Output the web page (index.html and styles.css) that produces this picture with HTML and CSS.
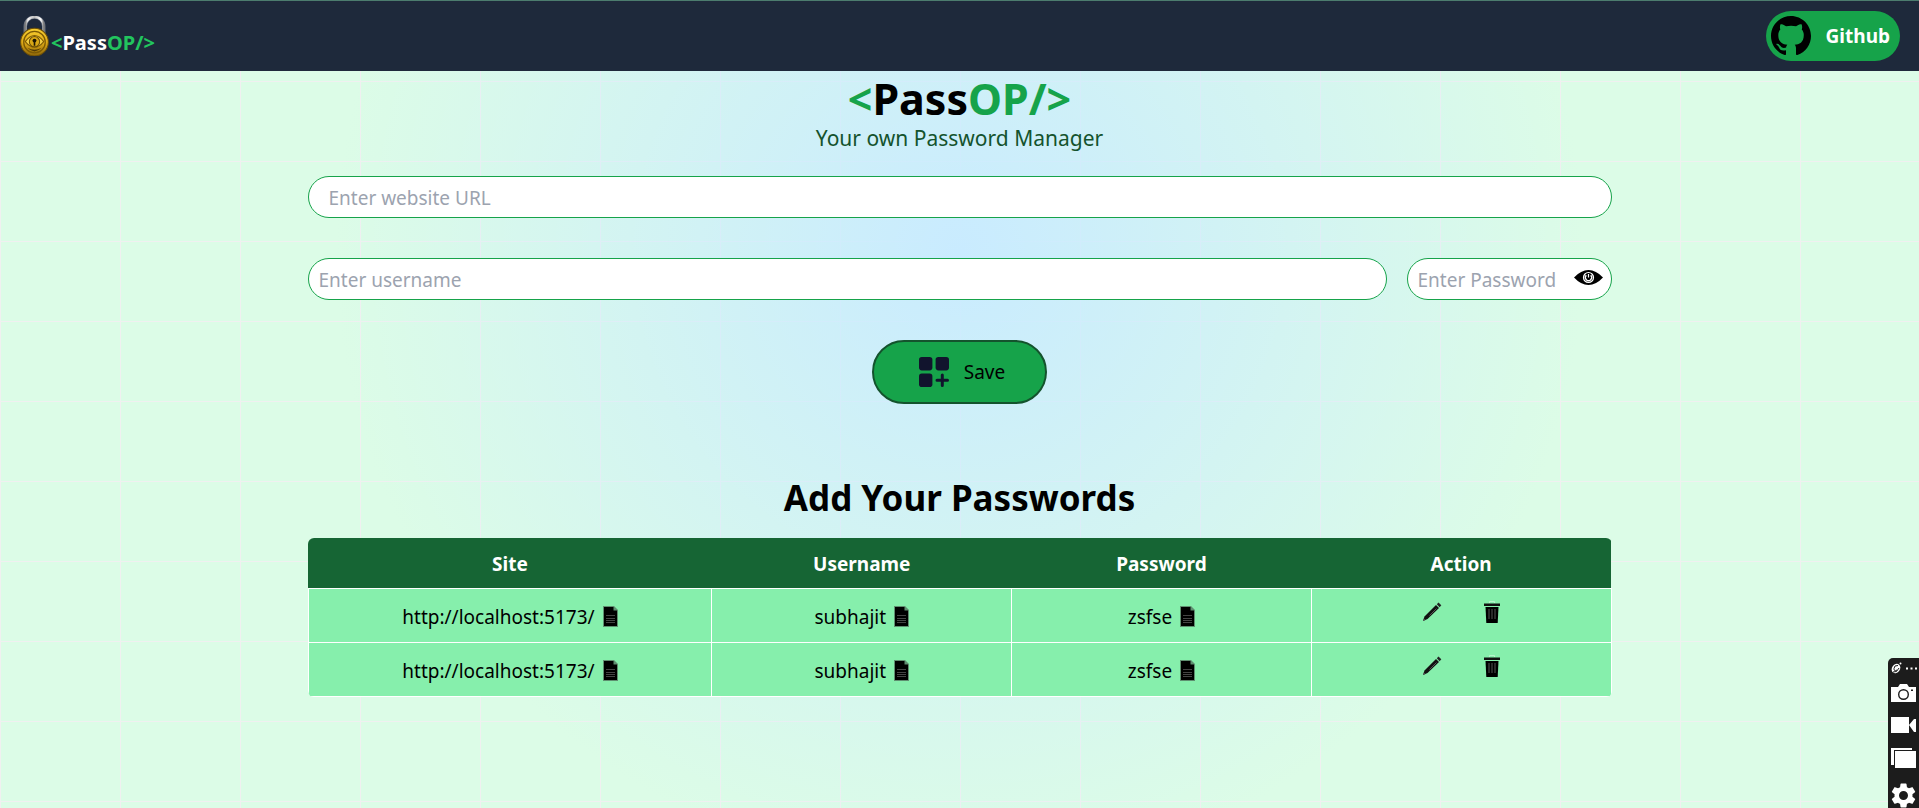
FILE: index.html
```html
<!DOCTYPE html>
<html lang="en">
<head>
<meta charset="utf-8">
<title>PassOP - Password Manager</title>
<link rel="stylesheet" href="styles.css">
</head>
<body>
<svg class="sprite" aria-hidden="true">
  <symbol id="doc" viewBox="0 0 15 21">
    <path d="M0 0h11l4 4v17H0z" fill="#5f8f70"/>
    <path d="M1 1h9.500v3.500H14V20H1z" fill="#000"/>
    <path d="M3 9.500h9M3 12.500h9M3 14.500h9M3 16.500h9" stroke="#444" stroke-width="1"/>
  </symbol>
  <symbol id="pencil" viewBox="0 0 20 20">
    <path d="M1 19l1.500-4.500L14 3l3 3L5.500 17z" fill="#111"/>
    <path d="M14.800 2.200L16.500.5l2.800 2.800-1.700 1.900z" fill="#222"/>
    <path d="M7.500 13.500L14.500 6.500" stroke="#555" stroke-width="1"/>
    <path d="M1 19l.8-2.500L3.500 18z" fill="#555"/>
  </symbol>
  <symbol id="trash" viewBox="0 0 16 22">
    <path d="M5.500 2V.5h5V2" fill="none" stroke="#b8f5cd" stroke-width="1"/>
    <path d="M0 2.500h16v2.500H0z" fill="#111"/>
    <path d="M1.500 6h13l-.8 16H2.300z" fill="#000"/>
    <path d="M5 8v10M8 8v10M11 8v10" stroke="#555" stroke-width="1"/>
  </symbol>
</svg>

<header class="navbar">
  <a class="brand" href="#">
    <svg class="lock" viewBox="0 0 28 39" aria-hidden="true">
      <defs>
        <linearGradient id="steel" x1="0" x2="1"><stop offset="0" stop-color="#777"/><stop offset=".15" stop-color="#f5f5f5"/><stop offset=".5" stop-color="#bbb"/><stop offset=".85" stop-color="#fff"/><stop offset="1" stop-color="#777"/></linearGradient>
        <linearGradient id="gold" x1="0" y1="0" x2="0" y2="1"><stop offset="0" stop-color="#f7cf32"/><stop offset=".5" stop-color="#e0ab17"/><stop offset="1" stop-color="#8d6508"/></linearGradient>
      </defs>
      <path d="M5 18V10a9 9 0 0 1 18 0v8" fill="none" stroke="#687080" stroke-width="3.400"/>
      <path d="M5 18V10a9 9 0 0 1 18 0v8" fill="none" stroke="url(#steel)" stroke-width="2.400"/>
      <circle cx="14" cy="25.500" r="13.500" fill="url(#gold)" stroke="#6b4e08"/>
      <circle cx="14" cy="25.500" r="10.500" fill="none" stroke="#7b5905" stroke-width="1.200"/>
      <path d="M5 25q9-12 18 0-9 11-18 0z" fill="#f3cf43" stroke="#7b5905"/>
      <path d="M7 31q7 4 14 0-7 7-14 0z" fill="#4f3905"/>
      <circle cx="14" cy="25" r="5" fill="#d9a716" stroke="#6b4e08"/>
      <circle cx="14" cy="24" r="1.900" fill="#1d1604"/>
      <path d="M13.200 24h1.600v5h-1.600z" fill="#1d1604"/>
    </svg>
    <span class="brand-name"><span class="lime">&lt;</span>Pass<span class="lime">OP/&gt;</span></span>
  </a>
  <button class="github" type="button">
    <svg class="octocat" viewBox="0 0 16 16" aria-hidden="true"><path d="M8 0C3.580 0 0 3.580 0 8c0 3.540 2.290 6.530 5.470 7.590.4.070.550-.17.550-.38 0-.19-.01-.82-.01-1.490-2.010.37-2.530-.49-2.690-.94-.09-.23-.48-.94-.82-1.130-.28-.15-.68-.52-.01-.53.630-.01 1.080.580 1.230.820.720 1.210 1.870.870 2.330.660.070-.52.280-.87.510-1.070-1.780-.2-3.640-.89-3.640-3.950 0-.87.310-1.590.820-2.150-.08-.2-.36-1.020.080-2.120 0 0 .67-.21 2.200.820.640-.18 1.320-.27 2-.27s1.360.09 2 .27c1.530-1.040 2.200-.82 2.200-.82.440 1.100.160 1.920.080 2.120.510.560.820 1.270.820 2.150 0 3.070-1.870 3.750-3.650 3.950.290.250.540.730.540 1.480 0 1.070-.01 1.930-.01 2.200 0 .21.150.460.550.380A8.010 8.010 0 0 0 16 8c0-4.420-3.580-8-8-8z"/></svg>
    <span>Github</span>
  </button>
</header>

<main class="container">
  <h1 class="title"><span class="green">&lt;</span>Pass<span class="green">OP/&gt;</span></h1>
  <p class="tagline">Your own Password Manager</p>

  <form class="form">
    <input class="field field-url" type="text" placeholder="Enter website URL" aria-label="Website URL">
    <div class="credentials">
      <input class="field" type="text" placeholder="Enter username" aria-label="Username">
      <div class="secret">
        <input class="field" type="password" placeholder="Enter Password" aria-label="Password">
        <button class="reveal" type="button" aria-label="Show password">
          <svg class="eye" viewBox="0 0 29 15" aria-hidden="true">
            <path d="M0 7.500Q7 0 14.500 0T29 7.500Q22 15 14.500 15T0 7.500z"/>
            <circle cx="14.500" cy="7.500" r="5" fill="none" stroke="#fff" stroke-width="1.200"/>
            <path d="M12.300 5.300a3.100 3.100 0 1 0 4.400 0" fill="none" stroke="#fff" stroke-width="1.300"/>
            <path d="M14.500 4v3.500" stroke="#fff" stroke-width="1.200"/>
          </svg>
        </button>
      </div>
    </div>
    <button class="save" type="button">
      <svg class="grid-plus" viewBox="0 0 30 30" aria-hidden="true">
        <rect width="13.400" height="13.400" rx="2.800"/><rect x="16.600" width="13.400" height="13.400" rx="2.800"/><rect y="16.600" width="13.400" height="13.400" rx="2.800"/>
        <path d="M23.300 18v10.500M18 23.300h10.500" stroke="#11142d" stroke-width="3" stroke-linecap="round"/>
      </svg>
      <span>Save</span>
    </button>
  </form>

  <h2 class="subtitle">Add Your Passwords</h2>
  <table class="passwords">
    <thead>
      <tr><th class="wide" scope="col">Site</th><th scope="col">Username</th><th scope="col">Password</th><th scope="col">Action</th></tr>
    </thead>
    <tbody>
      <tr>
        <td><div class="cell"><a href="http://localhost:5173/">http://localhost:5173/</a><button class="icon" type="button" aria-label="Copy site"><svg class="doc"><use href="#doc"/></svg></button></div></td>
        <td><div class="cell"><span>subhajit</span><button class="icon" type="button" aria-label="Copy username"><svg class="doc"><use href="#doc"/></svg></button></div></td>
        <td><div class="cell"><span>zsfse</span><button class="icon" type="button" aria-label="Copy password"><svg class="doc"><use href="#doc"/></svg></button></div></td>
        <td class="top"><div class="actions"><button class="icon" type="button" aria-label="Edit"><svg class="pencil"><use href="#pencil"/></svg></button><button class="icon" type="button" aria-label="Delete"><svg class="trash"><use href="#trash"/></svg></button></div></td>
      </tr>
      <tr>
        <td><div class="cell"><a href="http://localhost:5173/">http://localhost:5173/</a><button class="icon" type="button" aria-label="Copy site"><svg class="doc"><use href="#doc"/></svg></button></div></td>
        <td><div class="cell"><span>subhajit</span><button class="icon" type="button" aria-label="Copy username"><svg class="doc"><use href="#doc"/></svg></button></div></td>
        <td><div class="cell"><span>zsfse</span><button class="icon" type="button" aria-label="Copy password"><svg class="doc"><use href="#doc"/></svg></button></div></td>
        <td class="top"><div class="actions"><button class="icon" type="button" aria-label="Edit"><svg class="pencil"><use href="#pencil"/></svg></button><button class="icon" type="button" aria-label="Delete"><svg class="trash"><use href="#trash"/></svg></button></div></td>
      </tr>
    </tbody>
  </table>
</main>

<aside class="recorder" aria-label="Screen capture tools">
  <div class="recorder-head">
    <svg width="11" height="12" viewBox="0 0 11 12" aria-hidden="true"><ellipse cx="5" cy="6.500" rx="4" ry="5" transform="rotate(35 5 6.500)" fill="#fff"/><path d="M7 3.500Q3 3 3 6.500t3 1.500M2 10q4 1 6-4M8 2l2-1" fill="none" stroke="#1c1c1c"/><circle cx="9.500" cy="1.500" r="1" fill="#fff"/></svg>
    <svg width="11" height="3" viewBox="0 0 11 3" aria-hidden="true"><path d="M0 .5h2v2H0zM4.500.5h2v2h-2zM9 .5h2v2H9z" fill="#fff"/></svg>
  </div>
  <button class="tool" type="button" aria-label="Screenshot"><svg width="25" height="18" viewBox="0 0 25 18"><path d="M0 3h7l2-3h7l2 3h7v15H0z" fill="#fff"/><circle cx="12.500" cy="10.500" r="4.800" fill="none" stroke="#1c1c1c" stroke-width="1.400"/><path d="M20 5.500h2v1.500h-2z" fill="#1c1c1c"/></svg></button>
  <button class="tool" type="button" aria-label="Record video"><svg width="25" height="16" viewBox="0 0 25 16"><path d="M0 0h18v16H0zM18 8l5-6h2v13h-2z" fill="#fff"/></svg></button>
  <button class="tool" type="button" aria-label="Gallery"><svg width="25" height="20" viewBox="0 0 25 20"><path d="M0 0h21v2H3v15H0z" fill="#fff"/><path d="M4 3h21v17H4z" fill="#fff"/></svg></button>
  <button class="tool" type="button" aria-label="Settings"><svg width="25" height="25" viewBox="2 2 20 20"><path fill="#fff" d="M19.140 12.940c.040-.3.060-.61.060-.94 0-.32-.02-.64-.07-.94l2.030-1.580a.49.49 0 0 0 .12-.61l-1.920-3.320a.49.49 0 0 0-.59-.22l-2.390.96a7 7 0 0 0-1.620-.94l-.36-2.540a.48.48 0 0 0-.48-.41h-3.840a.48.48 0 0 0-.47.410l-.36 2.540c-.59.240-1.130.570-1.620.940l-2.390-.96a.48.48 0 0 0-.59.220L2.740 8.870a.48.48 0 0 0 .12.610l2.030 1.580c-.05.3-.09.630-.09.940s.020.640.070.940l-2.030 1.580a.49.49 0 0 0-.12.610l1.920 3.320c.12.220.37.290.59.220l2.390-.96c.5.380 1.030.7 1.620.940l.36 2.540c.05.240.24.410.48.410h3.840c.24 0 .44-.17.470-.41l.36-2.540a7 7 0 0 0 1.620-.94l2.390.96c.22.080.47 0 .59-.22l1.920-3.320a.48.48 0 0 0-.12-.61zM12 15.600A3.600 3.600 0 1 1 12 8.400a3.600 3.600 0 0 1 0 7.200z"/></svg></button>
</aside>
</body>
</html>
```

FILE: styles.css
```css
* { box-sizing: border-box; }

html { background: #dcfce7; }
body {
  margin: 0;
  min-height: 100vh;
  border-top: 1px solid #4c7c6e;
  font: 20px/30px "Segoe UI", "Noto Sans", sans-serif;
  color: #000;
  background:
    radial-gradient(circle 625px at 50% 250px, #c9ebff, transparent) 0 0 / 100% 100% no-repeat,
    linear-gradient(to right, #f0f0f0 1px, transparent 1px) 0 0 / 120px 80px,
    linear-gradient(to bottom, #f0f0f0 1px, transparent 1px) 0 0 / 120px 80px;
}

button { border: 0; padding: 0; background: none; font: inherit; color: inherit; cursor: pointer; }
svg { display: block; }
a { color: inherit; text-decoration: none; }
h1, h2, p { margin: 0; }
.sprite { position: absolute; width: 0; height: 0; }

.navbar {
  display: flex;
  justify-content: space-between;
  align-items: center;
  height: 70px;
  padding: 0 19px 0 20px;
  background: #1e293b;
  color: #fff;
  font-weight: 700;
}
.brand { display: flex; align-items: flex-end; gap: 2px; font-size: 20px; }
.brand-name { line-height: 26px; }
.lock { width: 29px; height: 40px; }
.lime { color: #22c55e; }
.github {
  display: flex;
  align-items: center;
  gap: 15px;
  padding: 5px 10px 5px 5px;
  border-radius: 25px;
  background: #16a34a;
  font-size: 19px;
}
.octocat { width: 40px; height: 40px; fill: #000; }

.container { width: 68%; max-width: 1304px; margin: 0 auto; padding-top: 3px; }
.title { font-size: 43px; line-height: 50px; text-align: center; }
.green { color: #16a34a; }
.tagline { font-size: 21px; line-height: 28px; text-align: center; color: #14532d; }

.form { display: flex; flex-direction: column; align-items: center; gap: 40px; padding-top: 24px; }
.field {
  width: 100%;
  min-width: 0;
  height: 42px;
  padding: 2px 10px 0;
  border: 1px solid #16a34a;
  border-radius: 21px;
  background: #fff;
  font: inherit;
  font-size: 19px;
}
.field::placeholder { color: #9ca3af; opacity: 1; }
.field-url { padding-left: 20px; }
.credentials { display: flex; gap: 20px; width: 100%; }
.secret { position: relative; flex: 0 0 205px; }
.reveal { position: absolute; right: 9px; top: 12px; }
.eye { width: 29px; height: 15px; }
.save {
  display: flex;
  align-items: center;
  gap: 15px;
  height: 64px;
  padding: 0 40px 0 45px;
  border: 2px solid #14532d;
  border-radius: 32px;
  background: #16a34a;
  font-size: 19px;
}
.grid-plus { width: 30px; height: 30px; fill: #11142d; }

.subtitle { padding: 69px 0 15px; font-size: 35px; line-height: 50px; text-align: center; }

.passwords {
  width: 100%;
  table-layout: fixed;
  border-collapse: collapse;
  border-radius: 6px;
  overflow: hidden;
  text-align: center;
  font-size: 19px;
}
.passwords th { height: 50px; padding: 2px 0 0; background: #166534; color: #fff; font-size: 19px; }
.passwords .wide { width: 31%; }
.passwords td { height: 54px; padding: 3px 0 0; border: 1px solid #fff; background: #86efac; }
.passwords .top { vertical-align: top; padding-top: 12px; }
.cell, .actions { display: flex; justify-content: center; align-items: center; gap: 8px; }
.actions { gap: 42px; }
.doc { width: 15px; height: 21px; }
.pencil { width: 20px; height: 20px; }
.trash { width: 16px; height: 22px; }

.recorder {
  position: fixed;
  right: 0;
  bottom: 0;
  display: flex;
  flex-direction: column;
  align-items: center;
  gap: 15px;
  padding-top: 4px;
  width: 31px;
  border-radius: 5px 0 0 0;
  background: #1c1c1c;
}
.recorder-head { display: flex; align-items: center; gap: 4px; height: 12px; margin-bottom: -5px; }
```
